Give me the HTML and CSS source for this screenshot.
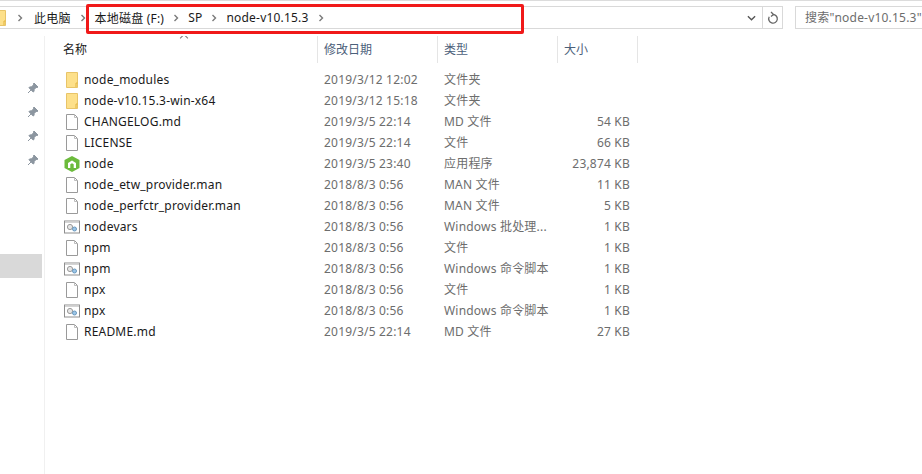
FILE: index.html
```html
<!DOCTYPE html>
<html lang="zh">
<head>
  <meta charset="UTF-8">
  <title>node-v10.15.3</title>
  <link rel="stylesheet" href="styles.css">
</head>
<body>
  <svg class="defs" width="0" height="0">
    <symbol id="folder" viewBox="0 0 16 16">
      <path d="M2.500.5h11v15h-11z" fill="#fde08a" stroke="#e8c468"/>
      <path d="M12 15v-4h1.500" fill="none" stroke="#e2b53f"/>
    </symbol>
    <symbol id="doc" viewBox="0 0 16 16">
      <path d="M2.500.5h8l3 3v12h-11z" fill="#fff" stroke="#9a9a9a"/>
      <path d="M10.500.5v3h3" fill="none" stroke="#bdbdbd"/>
    </symbol>
    <symbol id="script" viewBox="0 0 16 16">
      <rect x=".5" y="2" width="15" height="12" fill="#fff" stroke="#8e8e8e"/>
      <path d="M1 2.500h14V4H1z" fill="#d4d4d4"/>
      <circle cx="6" cy="8" r="2.600" fill="#e6e6e6" stroke="#9a9a9a"/>
      <circle cx="10.500" cy="10" r="2" fill="#9cc6e8" stroke="#6a98bd"/>
    </symbol>
    <symbol id="nodeapp" viewBox="0 0 16 16">
      <path d="M8 0l7.500 4v8L8 16 .5 12V4z" fill="#6cbb3c"/>
      <path d="M4 12V7l4-2.500L12 7v5H9.700V8.300L8 7.300l-1.700 1V12z" fill="#fff"/>
    </symbol>
    <symbol id="pin" viewBox="0 0 12 12">
      <path d="M7 1l4 4-1 .6-.8-.2L7.200 7.400 7 9.500 6.200 10 2 5.800l.5-.8 2.100-.2 2-2-.2-.8zM4 8l-3 3" fill="#8c96a0" stroke="#8c96a0"/>
    </symbol>
    <symbol id="chev" viewBox="0 0 6 8">
      <path d="M1.500 1l3 3-3 3" fill="none" stroke="#7a7a7a" stroke-width="1.400"/>
    </symbol>
  </svg>

  <div class="toolbar">
    <div class="address">
      <svg class="crumb-folder"><use href="#folder"/></svg>
      <svg class="chev"><use href="#chev"/></svg>
      <span class="crumb">此电脑</span>
      <svg class="chev"><use href="#chev"/></svg>
      <span class="crumb">本地磁盘 (F:)</span>
      <svg class="chev"><use href="#chev"/></svg>
      <span class="crumb">SP</span>
      <svg class="chev"><use href="#chev"/></svg>
      <span class="crumb">node-v10.15.3</span>
      <svg class="chev"><use href="#chev"/></svg>
      <span class="spacer"></span>
      <svg class="drop" viewBox="0 0 10 6"><path d="M1 1l4 4 4-4" fill="none" stroke="#555" stroke-width="1.500"/></svg>
      <span class="refresh">
        <svg viewBox="0 0 12 14" width="12" height="14"><path d="M6 3.500a4.300 4.300 0 1 1-3.800 2.300M4 1l2.500 2.500L4 5.500" fill="none" stroke="#666" stroke-width="1.300"/></svg>
      </span>
    </div>
    <div class="search">搜索"node-v10.15.3"</div>
  </div>
  <div class="highlight"></div>

  <div class="main">
    <aside class="nav">
      <div class="pins">
        <svg><use href="#pin"/></svg>
        <svg><use href="#pin"/></svg>
        <svg><use href="#pin"/></svg>
        <svg><use href="#pin"/></svg>
      </div>
      <div class="nav-selected"></div>
    </aside>

    <section class="files">
      <div class="row head">
        <div class="cell name">名称<i class="sort"></i></div>
        <div class="cell">修改日期</div>
        <div class="cell">类型</div>
        <div class="cell">大小</div>
      </div>

      <div class="rows">
        <div class="row"><div class="cell name"><svg class="ico"><use href="#folder"/></svg>node_modules</div><div class="cell">2019/3/12 12:02</div><div class="cell">文件夹</div><div class="cell size"></div></div>
        <div class="row"><div class="cell name"><svg class="ico"><use href="#folder"/></svg>node-v10.15.3-win-x64</div><div class="cell">2019/3/12 15:18</div><div class="cell">文件夹</div><div class="cell size"></div></div>
        <div class="row"><div class="cell name"><svg class="ico"><use href="#doc"/></svg>CHANGELOG.md</div><div class="cell">2019/3/5 22:14</div><div class="cell">MD 文件</div><div class="cell size">54 KB</div></div>
        <div class="row"><div class="cell name"><svg class="ico"><use href="#doc"/></svg>LICENSE</div><div class="cell">2019/3/5 22:14</div><div class="cell">文件</div><div class="cell size">66 KB</div></div>
        <div class="row"><div class="cell name"><svg class="ico"><use href="#nodeapp"/></svg>node</div><div class="cell">2019/3/5 23:40</div><div class="cell">应用程序</div><div class="cell size">23,874 KB</div></div>
        <div class="row"><div class="cell name"><svg class="ico"><use href="#doc"/></svg>node_etw_provider.man</div><div class="cell">2018/8/3 0:56</div><div class="cell">MAN 文件</div><div class="cell size">11 KB</div></div>
        <div class="row"><div class="cell name"><svg class="ico"><use href="#doc"/></svg>node_perfctr_provider.man</div><div class="cell">2018/8/3 0:56</div><div class="cell">MAN 文件</div><div class="cell size">5 KB</div></div>
        <div class="row"><div class="cell name"><svg class="ico"><use href="#script"/></svg>nodevars</div><div class="cell">2018/8/3 0:56</div><div class="cell">Windows 批处理...</div><div class="cell size">1 KB</div></div>
        <div class="row"><div class="cell name"><svg class="ico"><use href="#doc"/></svg>npm</div><div class="cell">2018/8/3 0:56</div><div class="cell">文件</div><div class="cell size">1 KB</div></div>
        <div class="row"><div class="cell name"><svg class="ico"><use href="#script"/></svg>npm</div><div class="cell">2018/8/3 0:56</div><div class="cell">Windows 命令脚本</div><div class="cell size">1 KB</div></div>
        <div class="row"><div class="cell name"><svg class="ico"><use href="#doc"/></svg>npx</div><div class="cell">2018/8/3 0:56</div><div class="cell">文件</div><div class="cell size">1 KB</div></div>
        <div class="row"><div class="cell name"><svg class="ico"><use href="#script"/></svg>npx</div><div class="cell">2018/8/3 0:56</div><div class="cell">Windows 命令脚本</div><div class="cell size">1 KB</div></div>
        <div class="row"><div class="cell name"><svg class="ico"><use href="#doc"/></svg>README.md</div><div class="cell">2019/3/5 22:14</div><div class="cell">MD 文件</div><div class="cell size">27 KB</div></div>
      </div>
    </section>
  </div>
</body>
</html>
```

FILE: styles.css
```css
/* Global */
*, *::before, *::after { box-sizing: border-box; }
html, body { height: 100%; }
body {
  margin: 0;
  overflow: hidden;
  background: #fff;
  color: #1a1a1a;
  font-family: "Noto Sans", "Noto Sans CJK SC", sans-serif;
  font-size: 12px;
  letter-spacing: .2px;
}
.defs { position: absolute; }

/* Toolbar */
.toolbar {
  display: flex;
  height: 36px;
  padding-top: 5px;
  border-top: 1px solid #dcdcdc;
}
.address {
  display: flex;
  align-items: center;
  width: 783px;
  height: 23px;
  border: 1px solid #d9d9d9;
  border-left: none;
}
.crumb-folder { width: 16px; height: 16px; margin-left: -8px; }
.chev { width: 6px; height: 8px; margin: 0 9px 0 9px; flex: none; }
.crumb-folder + .chev { margin-left: 9px; margin-right: 11px; }
.crumb { white-space: nowrap; }
.spacer { flex: 1; }
.drop { width: 9px; height: 6px; margin-right: 6px; }
.refresh {
  display: flex;
  align-items: center;
  justify-content: center;
  width: 20px;
  height: 100%;
  border-left: 1px solid #d9d9d9;
}
.search {
  flex: 1;
  height: 23px;
  margin-left: 12px;
  padding-left: 9px;
  border: 1px solid #d9d9d9;
  border-right: none;
  color: #6d6d6d;
  line-height: 21px;
  white-space: nowrap;
  overflow: hidden;
}

/* Red marker drawn over the address bar */
.highlight {
  position: absolute;
  left: 86px;
  top: 4px;
  width: 438px;
  height: 30px;
  border: 3px solid #f01919;
  border-radius: 2px;
}

/* Main area */
.main { display: flex; height: calc(100% - 36px); }
.nav {
  width: 45px;
  flex: none;
  border-right: 1px solid #f0f0f0;
  padding-top: 46px;
}
.pins { display: flex; flex-direction: column; align-items: flex-end; gap: 12px; padding-right: 5px; }
.pins svg { width: 12px; height: 12px; }
.nav-selected { width: 42px; height: 24px; margin-top: 88px; background: #d9d9d9; }

/* File list */
.files { flex: 1; }
.row {
  display: grid;
  grid-template-columns: 273px 120px 120px 80px;
  height: 21px;
  line-height: 21px;
  color: #6d6d6d;
}
.cell { white-space: nowrap; padding-left: 6px; overflow: hidden; }
.name { display: flex; align-items: center; color: #1a1a1a; padding-left: 19px; }
.size { text-align: right; padding-right: 8px; }
.ico { width: 16px; height: 16px; margin-right: 4px; flex: none; }

.head { height: 27px; line-height: 28px; color: #4c607a; letter-spacing: 0; }
.head .cell { position: relative; border-right: 1px solid #e5e5e5; }
.head .name { padding-left: 18px; }
.sort {
  position: absolute;
  left: 136px;
  top: -1px;
  width: 6px;
  height: 6px;
  border-left: 1px solid #777;
  border-top: 1px solid #777;
  transform: rotate(45deg);
}
.rows { padding-top: 6px; }
```
